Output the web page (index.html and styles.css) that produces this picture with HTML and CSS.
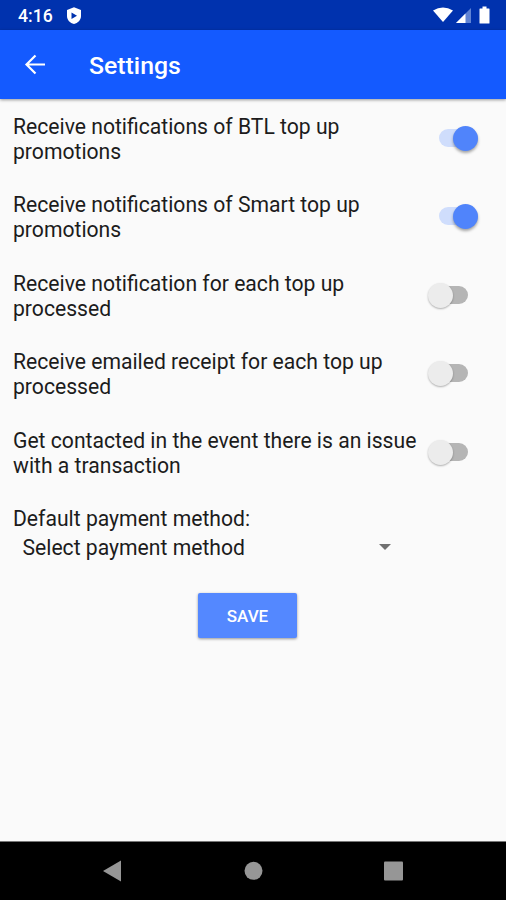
FILE: index.html
```html
<!DOCTYPE html>
<html lang="en">
<head>
<meta charset="utf-8">
<title>Settings</title>
<link rel="stylesheet" href="styles.css">
</head>
<body>
<div class="status">
  <span class="time">4:16</span>
  <svg class="shield" width="16" height="18" viewBox="0 0 16 18"><path fill="#fff" fill-rule="evenodd" d="M8 .3 15 3v6c0 4-3 7-7 8C4 16 1 13 1 9V3zM5.500 5.500v6.500l5.500-3.300z"/></svg>
  <svg class="signals" width="60" height="20" viewBox="0 0 60 20"><path fill="#fff" d="M1 4.500Q11-1.500 21 4.500L11 16z"/><path fill="#5f83d4" d="M39 2v15H24z"/><path fill="#fff" d="M33.500 7.500V17H24z"/><path fill="#fff" d="M48 2.500h2.500V.5h4v2H57q.5 0 .5.500v14q0 .500-.5.500h-9q-.5 0-.5-.500V3q0-.500.5-.500z"/></svg>
</div>
<header class="bar">
  <svg class="back" width="22" height="22" viewBox="0 0 22 22"><path fill="none" stroke="#fff" stroke-width="2.200" d="M21 10.500H3M11.500 1.500 2.500 10.500l9 9"/></svg>
  <h1>Settings</h1>
</header>
<main>
  <label class="row"><span>Receive notifications of BTL top up<br>promotions</span><i class="switch on"></i></label>
  <label class="row"><span>Receive notifications of Smart top up<br>promotions</span><i class="switch on"></i></label>
  <label class="row"><span>Receive notification for each top up<br>processed</span><i class="switch"></i></label>
  <label class="row"><span>Receive emailed receipt for each top up<br>processed</span><i class="switch"></i></label>
  <label class="row"><span>Get contacted in the event there is an issue<br>with a transaction</span><i class="switch"></i></label>
  <div class="pay">Default payment method:</div>
  <div class="select"><span>Select payment method</span><i class="caret"></i></div>
  <button class="save">SAVE</button>
</main>
<nav>
  <svg width="506" height="58" viewBox="0 0 506 58"><path fill="#969696" d="M103 29 121 18.500v21z"/><circle cx="253.500" cy="28.800" r="9" fill="#969696"/><rect x="384" y="19.500" width="19" height="19" rx="1" fill="#969696"/></svg>
</nav>
</body>
</html>
```
FILE: styles.css
```css
* { box-sizing: border-box; }
body { margin: 0; height: 900px; display: flex; flex-direction: column; overflow: hidden; background: #fafafa; font-family: Roboto, sans-serif; color: #1c1c1c; }
.status { height: 30px; flex: none; display: flex; align-items: center; padding: 2px 14px 0 18px; background: #0032ae; color: #fff; }
.time { font-size: 17.600px; font-weight: 500; width: 48px; }
.signals { margin-left: auto; }
.bar { height: 69px; flex: none; display: flex; align-items: center; padding: 0 24px; background: #145aff; color: #fff; box-shadow: 0 1px 3px rgba(0,0,0,.4); }
h1 { margin: 2px 0 0 43px; font-size: 24.800px; font-weight: 500; }
main { flex: 1; display: flex; flex-direction: column; padding: 15px 28px 0 13px; font-size: 21.150px; line-height: 25px; }
.row { display: flex; justify-content: space-between; height: 78.400px; white-space: nowrap; }
.switch { flex: none; position: relative; width: 39px; height: 18px; margin: 15px 10px 0 0; border-radius: 9px; background: #b5b5b5; }
.switch::before { content: ""; position: absolute; left: -1px; top: -3px; width: 25px; height: 25px; border-radius: 50%; background: #ececec; box-shadow: 0 1px 2px rgba(0,0,0,.3); }
.switch.on { margin-right: 0; background: #cfddfc; }
.switch.on::before { left: 14px; background: #5084fb; box-shadow: 0 2px 3px rgba(0,0,0,.35); }
.select { display: flex; justify-content: space-between; align-items: center; width: 378px; padding-left: 9.500px; margin-top: 4px; }
.caret { border: 6px solid transparent; border-top-color: #707070; border-bottom: 0; }
.save { width: 99px; height: 45px; margin: 33px 0 0 185px; padding: 2px 0 0; border: 0; border-radius: 2px; background: #5488ff; color: #fff; font: 500 17px Roboto, sans-serif; box-shadow: 0 1px 3px rgba(0,0,0,.4); }
nav { height: 59px; flex: none; border-top: 1px solid #777; background: #000; }
nav svg { display: block; }
```
